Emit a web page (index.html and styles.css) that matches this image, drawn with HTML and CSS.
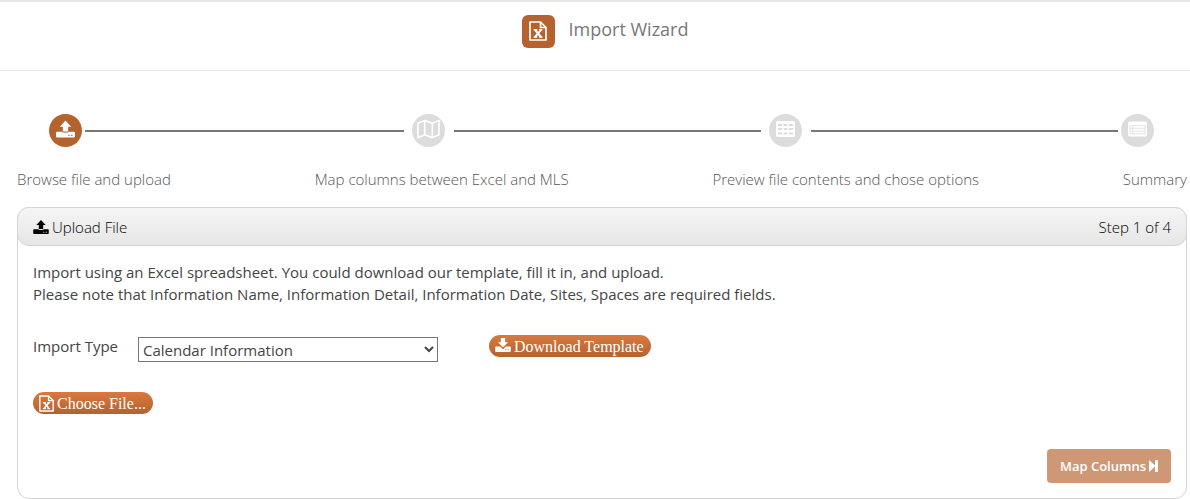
FILE: index.html
```html
<!DOCTYPE html>
<html lang="en">
<head>
  <meta charset="UTF-8">
  <title>Import Wizard</title>
  <meta name="viewport" content="width=device-width, initial-scale=1.0">
  <link rel="stylesheet" href="styles.css">
</head>
<body>
  <!-- shared icons -->
  <svg class="sprite" aria-hidden="true">
    <symbol id="icon-excel" viewBox="0 0 18 20">
      <path d="M1 1H11.5L17 6.5V19H1Z M11.5 1V6.5H17" fill="none" stroke="currentColor" stroke-width="1.7" stroke-linejoin="round"/>
      <path d="M6 8.8L12 16 M12 8.8L6 16" fill="none" stroke="currentColor" stroke-width="2"/>
      <path d="M4.6 8.8H8.3 M10 8.8H13.4 M4.6 16H8.3 M10 16H13.4" fill="none" stroke="currentColor" stroke-width="1.5"/>
    </symbol>
    <symbol id="icon-upload" viewBox="0 0 20 18">
      <path d="M10 0L16 6.5H12.8V11.5H7.2V6.5H4Z" fill="currentColor"/>
      <path fill-rule="evenodd" d="M1.2 12H6.3C6.6 13.2 13.4 13.2 13.7 12H18.8Q20 12 20 13V17Q20 18 18.8 18H1.2Q0 18 0 17V13Q0 12 1.2 12ZM13 15H14.3V16.3H13ZM16 15H17.3V16.3H16Z" fill="currentColor"/>
    </symbol>
    <symbol id="icon-download" viewBox="0 0 20 18">
      <path d="M7.2 0H12.8V5.5H16.5L10 12L3.5 5.5H7.2Z" fill="currentColor"/>
      <path fill-rule="evenodd" d="M1.2 11H6.3L10 14.5L13.7 11H18.8Q20 11 20 12V17Q20 18 18.8 18H1.2Q0 18 0 17V12Q0 11 1.2 11ZM13 14.5H14.3V15.8H13ZM16 14.5H17.3V15.8H16Z" fill="currentColor"/>
    </symbol>
  </svg>

  <header class="top">
    <span class="logo"><svg class="logo-icon"><use href="#icon-excel"/></svg></span>
    <h1>Import Wizard</h1>
  </header>

  <main class="wizard">
    <div class="steps">
      <span class="step active"><svg class="step-icon"><use href="#icon-upload"/></svg></span>
      <span class="line first"></span>
      <span class="step">
        <svg class="map-icon" viewBox="0 0 24 20">
          <path d="M1 4L8 1L16 4L23 1V16L16 19L8 16L1 19Z M8 1V16 M16 4V19" fill="none" stroke="currentColor" stroke-width="1.7" stroke-linejoin="round"/>
        </svg>
      </span>
      <span class="line"></span>
      <span class="step">
        <svg class="step-icon" viewBox="0 0 19 16">
          <path fill-rule="evenodd" d="M1.5 0H17.5Q19 0 19 1.5V14.5Q19 16 17.5 16H1.5Q0 16 0 14.5V1.5Q0 0 1.5 0ZM2 3V5H6V3ZM7.5 3V5H11.5V3ZM13 3V5H17V3ZM2 7V9H6V7ZM7.5 7V9H11.5V7ZM13 7V9H17V7ZM2 11.5V13.5H6V11.5ZM7.5 11.5V13.5H11.5V11.5ZM13 11.5V13.5H17V11.5Z" fill="currentColor"/>
        </svg>
      </span>
      <span class="line"></span>
      <span class="step">
        <svg class="step-icon" viewBox="0 0 20 16">
          <rect width="20" height="16" rx="2" fill="currentColor"/>
          <path d="M2 4.5H18V13H2Z M2 7.3H18 M2 10.2H18 M5 4.5V13" fill="none" stroke="#dcdcdc" stroke-width=".8"/>
        </svg>
      </span>
    </div>
    <div class="step-labels">
      <span>Browse file and upload</span>
      <span>Map columns between Excel and MLS</span>
      <span>Preview file contents and chose options</span>
      <span>Summary</span>
    </div>

    <section class="panel">
      <div class="panel-header">
        <h2><svg class="head-icon"><use href="#icon-upload"/></svg>Upload File</h2>
        <span>Step 1 of 4</span>
      </div>
      <div class="panel-body">
        <p>Import using an Excel spreadsheet. You could download our template, fill it in, and upload.<br>
        Please note that Information Name, Information Detail, Information Date, Sites, Spaces are required fields.</p>

        <div class="import-row">
          <label for="importType">Import Type</label>
          <select id="importType">
            <option>Calendar Information</option>
          </select>
          <button type="button" class="pill"><svg class="pill-icon"><use href="#icon-download"/></svg>Download Template</button>
        </div>

        <button type="button" class="pill"><svg class="file-icon"><use href="#icon-excel"/></svg>Choose File...</button>

        <div class="actions">
          <button type="button" class="next" id="next">Map Columns
            <svg class="next-icon" viewBox="0 0 9 12"><path d="M0 0L6 5.5V0H9V12H6V6.5L0 12Z" fill="currentColor"/></svg>
          </button>
        </div>
      </div>
    </section>
  </main>
</body>
</html>
```
FILE: styles.css
```css
* {
  box-sizing: border-box;
}
body {
  margin: 0;
  font-family: 'Segoe UI', 'Open Sans', sans-serif;
  font-size: 15px;
  line-height: 22px;
  color: #444;
  background: #fff;
}
.sprite {
  display: none;
}
h1, h2, p {
  margin: 0;
  font-weight: 400;
}
.top {
  display: flex;
  justify-content: center;
  gap: 14px;
  padding: 13px 0 22px 20px;
  border-top: 2px solid #e7e7e7;
  border-bottom: 1px solid #e9e9e9;
}
.top h1 {
  font-size: 18px;
  line-height: 28px;
  color: #777;
}
.logo {
  display: flex;
  align-items: center;
  justify-content: center;
  width: 33px;
  height: 33px;
  border-radius: 6px;
  background: #b5622f;
  color: #fff;
}
.logo-icon {
  width: 18px;
  height: 20px;
  margin-bottom: 2px;
}
.wizard {
  padding: 43px 3px 0 17px;
}
.steps {
  display: flex;
  align-items: center;
  padding: 0 33px 0 32px;
}
.step {
  display: flex;
  align-items: center;
  justify-content: center;
  width: 33px;
  height: 33px;
  border-radius: 50%;
  background: #dcdcdc;
  color: #fff;
}
.step.active {
  background: #b5622f;
}
.step-icon {
  width: 19px;
  height: 18px;
  margin-bottom: 4px;
}
.map-icon {
  width: 23px;
  height: 20px;
  margin-bottom: 4px;
}
.line {
  flex: 1;
  height: 2px;
  margin: 0 8px 0 9px;
  background: #777;
}
.line.first {
  flex: 1 1 12px;
  margin-left: 3px;
}
.line:nth-last-child(2) {
  margin-right: 3px;
}
.step-labels {
  display: flex;
  justify-content: space-between;
  margin-top: 21px;
  font-weight: 300;
  color: #555;
}
.panel {
  margin-top: 17px;
  border: 1px solid #d5d5d5;
  border-radius: 12px;
}
.panel-header {
  display: flex;
  justify-content: space-between;
  margin: -1px;
  padding: 8px 15px 7px;
  border: 1px solid #d5d5d5;
  border-radius: 12px;
  background: linear-gradient(#f5f5f5, #e6e6e6);
  font-weight: 300;
  color: #000;
}
.panel-header h2 {
  font-size: 15px;
  font-weight: 300;
}
.head-icon {
  width: 16px;
  height: 14px;
  margin-right: 3px;
  vertical-align: -1px;
}
.panel-body {
  padding: 16px 15px 15px;
}
.import-row {
  display: flex;
  align-items: flex-start;
  margin: 30px 0;
}
.import-row label {
  width: 105px;
}
.import-row select {
  width: 300px;
  height: 25px;
  margin: 2px 51px 0 0;
  padding: 0;
  border: 1px solid #767676;
  background: #fff;
  color: #444;
  font-family: inherit;
  font-size: 15px;
}
.pill {
  display: flex;
  align-items: center;
  gap: 3px;
  height: 22px;
  padding: 2px 7px 0 6px;
  border: 0;
  border-radius: 11px;
  background: linear-gradient(#d9793f, #b5622f);
  color: #fff;
  font-family: 'Liberation Serif', serif;
  font-size: 16px;
  cursor: pointer;
}
.pill-icon {
  width: 16px;
  height: 14px;
  margin-bottom: 5px;
}
.file-icon {
  width: 15px;
  height: 17px;
  margin-bottom: 2px;
}
.actions {
  display: flex;
  justify-content: flex-end;
  margin-top: 35px;
}
.next {
  display: flex;
  align-items: center;
  gap: 3px;
  height: 34px;
  padding: 0 13px;
  border: 0;
  border-radius: 4px;
  background: #b5622f;
  color: #fff;
  font-family: inherit;
  font-size: 13px;
  font-weight: 600;
  opacity: 0.65;
}
.next-icon {
  width: 9px;
  height: 12px;
}
```
